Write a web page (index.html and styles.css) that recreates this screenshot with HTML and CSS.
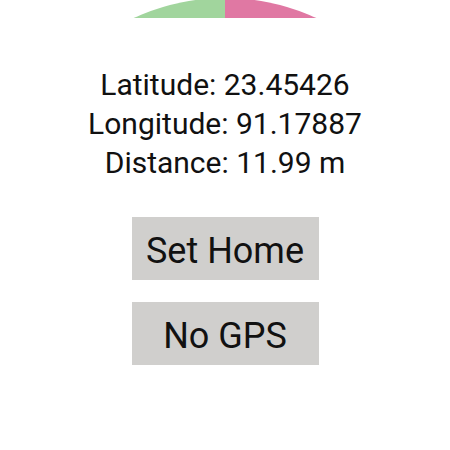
FILE: index.html
```html
<!DOCTYPE html>
<html>
<head>
<meta charset="utf-8">
<link rel="stylesheet" href="styles.css">
</head>
<body>
<div class="screen">
  <svg class="dome" width="450" height="18" viewBox="0 0 450 18">
    <clipPath id="c"><rect x="0" y="0" width="450" height="18"/></clipPath>
    <g clip-path="url(#c)">
      <path d="M225 217 L225 -2 A219 219 0 0 0 6 217 Z" fill="#a1d59d"/>
      <path d="M225 217 L225 -2 A219 219 0 0 1 444 217 Z" fill="#e078a3"/>
    </g>
  </svg>
  <div class="info">
    <div class="line">Latitude: 23.45426</div>
    <div class="line">Longitude: 91.17887</div>
    <div class="line">Distance: 11.99 m</div>
  </div>
  <div class="buttons">
    <button class="btn">Set Home</button>
    <button class="btn">No GPS</button>
  </div>
</div>
</body>
</html>
```
FILE: styles.css
```css
html, body {
  margin: 0;
  padding: 0;
  background: #ffffff;
}
.screen {
  width: 450px;
  height: 450px;
  display: flex;
  flex-direction: column;
  align-items: center;
  font-family: Roboto, "Noto Sans", sans-serif;
  color: #111111;
}
.dome {
  display: block;
}
.info {
  margin-top: 47px;
  display: flex;
  flex-direction: column;
  align-items: center;
}
.line {
  font-size: 30px;
  line-height: 39px;
  white-space: nowrap;
}
.buttons {
  margin-top: 35px;
  display: flex;
  flex-direction: column;
  align-items: center;
  gap: 22px;
}
.btn {
  box-sizing: border-box;
  width: 187px;
  height: 63px;
  border: none;
  background: #d0cfcd;
  font-family: Roboto, "Noto Sans", sans-serif;
  font-size: 36px;
  color: #111111;
  padding: 4px 0 0;
}
```
